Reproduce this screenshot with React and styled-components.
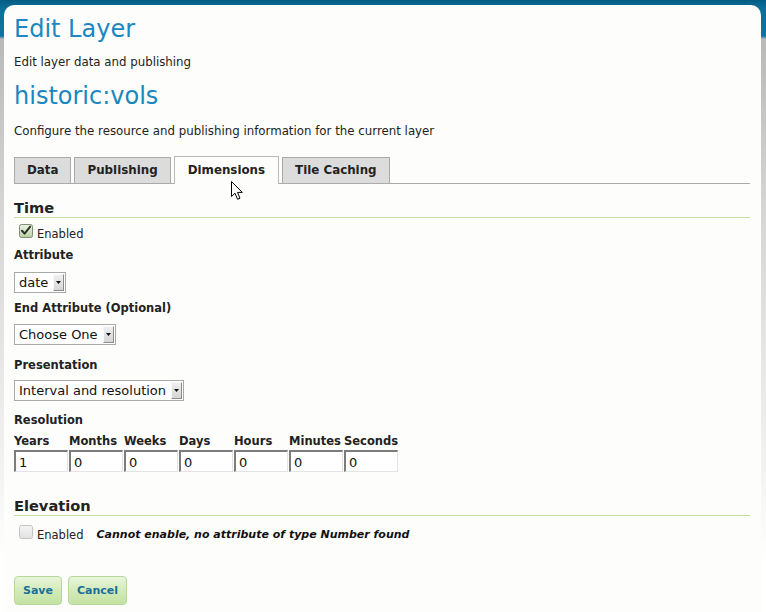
import React from 'react';
import styled, { createGlobalStyle } from 'styled-components';

const GlobalStyle = createGlobalStyle`
  html, body {
    margin: 0;
    padding: 0;
    background: #ffffff;
  }
  body {
    font-family: "DejaVu Sans", Verdana, sans-serif;
    color: #222;
  }
`;

const Frame = styled.div`
  min-height: 612px;
  box-sizing: border-box;
  padding: 5px 5px 0 4px;
  background: linear-gradient(180deg, #035c84 0px, #0b6f98 8px, #0d75a0 36px, #b9b9b9 39px, #d4d4d4 200px, #f4f4f4 480px, #ffffff 560px);
`;

const Panel = styled.div`
  position: relative;
  min-height: 607px;
  box-sizing: border-box;
  background: #fdfdfb;
  border-radius: 10px 10px 0 0;
  padding: 9px 11px 0 10px;
`;

const Title = styled.h1`
  margin: 0;
  font-size: 24px;
  line-height: 30px;
  font-weight: normal;
  color: #1a87c1;
`;

const Intro = styled.p`
  margin: ${p => p.$top}px 0 0;
  font-size: 11.8px;
  line-height: 16px;
  color: #222;
`;

const TabStrip = styled.div`
  position: relative;
  display: flex;
  align-items: flex-end;
  gap: 3px;
  margin-top: 17px;
  border-bottom: 1px solid #aaaaaa;
`;

const Tab = styled.div`
  box-sizing: border-box;
  padding: ${p => (p.$active ? '1px 13px 1px' : '0 12px')};
  margin-bottom: ${p => (p.$active ? '-1px' : '0')};
  border: 1px solid ${p => (p.$active ? '#b8b8b8' : '#aaaaaa')};
  border-bottom: none;
  background: ${p => (p.$active ? '#fdfdfb' : '#dcdcdc')};
  font-size: 11.85px;
  font-weight: bold;
  line-height: 25px;
  color: #222;
`;

const Cursor = styled.svg`
  position: absolute;
  left: 217px;
  top: 25px;
`;

const SectionTitle = styled.h3`
  margin: ${p => p.$top}px 0 0;
  padding-bottom: 1px;
  font-size: 14.6px;
  line-height: 17px;
  font-weight: bold;
  color: #222;
  border-bottom: 1px solid #c4dfa4;
`;

const CheckRow = styled.div`
  display: flex;
  align-items: flex-start;
  margin-top: ${p => p.$top}px;
  padding-left: 5px;
`;

const CheckText = styled.span`
  padding-top: 3px;
  margin-left: 4px;
  font-size: 11.5px;
  line-height: 14px;
  color: #222;
`;

const Note = styled.span`
  padding-top: 3px;
  margin-left: 13px;
  font-size: 11px;
  line-height: 14px;
  font-weight: bold;
  font-style: italic;
  color: #111;
`;

const Label = styled.div`
  margin-top: ${p => p.$top}px;
  font-size: 11.5px;
  line-height: 14px;
  font-weight: bold;
  color: #222;
`;

const SelectBox = styled.div`
  display: inline-flex;
  align-items: center;
  box-sizing: border-box;
  height: 21px;
  margin-top: ${p => p.$top}px;
  padding: 0 1px 0 4px;
  border: 1px solid #a9a9a9;
  background: #ffffff;
  font-size: 13px;
  color: #111;
`;

const SelectArrow = styled.span`
  display: flex;
  align-items: center;
  justify-content: center;
  box-sizing: border-box;
  width: 11px;
  height: 17px;
  margin-left: 5px;
  background: linear-gradient(180deg, #efefef, #d6d6d6);
  border-right: 1px solid #8c8c8c;
  border-bottom: 1px solid #8c8c8c;
  border-top: 1px solid #f8f8f8;
  border-left: 1px solid #f8f8f8;
`;

const Grid = styled.div`
  display: grid;
  grid-template-columns: repeat(7, 55px);
  margin-top: 7px;
`;

const GridLabel = styled.div`
  font-size: 11.5px;
  line-height: 14px;
  font-weight: bold;
  color: #222;
  white-space: nowrap;
`;

const NumberInput = styled.input`
  box-sizing: border-box;
  width: 54px;
  height: 22px;
  margin-top: 2px;
  padding: 2px 0 0 3px;
  border-style: solid;
  border-width: 2px 1px 1px 2px;
  border-color: #7c7c7c #e4e4e4 #e4e4e4 #7c7c7c;
  background: #fff;
  font-family: "DejaVu Sans", Verdana, sans-serif;
  font-size: 13px;
  color: #111;
  outline: none;
`;

const Buttons = styled.div`
  display: flex;
  gap: 6px;
  margin-top: 34px;
`;

const Button = styled.button`
  box-sizing: border-box;
  height: 29px;
  padding: 0 8px;
  border: 1px solid #b6d99a;
  border-radius: 4px;
  background: linear-gradient(180deg, #e9f5dc 0%, #d3eab9 50%, #c3e2a3 100%);
  font-family: "DejaVu Sans", Verdana, sans-serif;
  font-size: 11px;
  font-weight: bold;
  line-height: 27px;
  color: #1b6f98;
`;

const Checkbox = ({ checked, disabled }) => (
  <svg width="14" height="14" viewBox="0 0 14 14">
    <defs>
      <linearGradient id={disabled ? 'cbOff' : 'cbOn'} x1="0" y1="0" x2="0" y2="1">
        <stop offset="0" stopColor={disabled ? '#f4f4f4' : '#eef3e6'} />
        <stop offset="1" stopColor={disabled ? '#e2e2e2' : '#b9cfa4'} />
      </linearGradient>
    </defs>
    <rect x="0.5" y="0.5" width="13" height="13" rx="2" fill={`url(#${disabled ? 'cbOff' : 'cbOn'})`} stroke={disabled ? '#c4c4c4' : '#7d8f70'} />
    {checked && (
      <path d="M3 6.8 L5.6 9.6 L11.2 2.6" fill="none" stroke="#2b3326" strokeWidth="2" strokeLinecap="round" strokeLinejoin="round" />
    )}
  </svg>
);

const Select = ({ value, top }) => (
  <div>
    <SelectBox $top={top}>
      {value}
      <SelectArrow>
        <svg width="5" height="3" viewBox="0 0 5 3">
          <path d="M0 0 H5 L2.5 3 Z" fill="#111" />
        </svg>
      </SelectArrow>
    </SelectBox>
  </div>
);

const units = [
  ['Years', '1'],
  ['Months', '0'],
  ['Weeks', '0'],
  ['Days', '0'],
  ['Hours', '0'],
  ['Minutes', '0'],
  ['Seconds', '0'],
];

const tabs = ['Data', 'Publishing', 'Dimensions', 'Tile Caching'];

export default function App() {
  return (
    <Frame>
      <GlobalStyle />
      <Panel>
        <Title>Edit Layer</Title>
        <Intro $top={10}>Edit layer data and publishing</Intro>
        <Title as="h2" style={{ marginTop: 11 }}>historic:vols</Title>
        <Intro $top={12}>Configure the resource and publishing information for the current layer</Intro>

        <TabStrip>
          {tabs.map(t => (
            <Tab key={t} $active={t === 'Dimensions'}>{t}</Tab>
          ))}
          <Cursor width="13" height="20" viewBox="0 0 13 20">
            <path d="M0.5 0.5 L0.5 15.5 L4 12.2 L6.6 18.3 L9 17.3 L6.5 11.4 L11.3 11.4 Z" fill="#fff" stroke="#000" strokeWidth="1" strokeLinejoin="miter" />
          </Cursor>
        </TabStrip>

        <SectionTitle $top={15}>Time</SectionTitle>
        <CheckRow $top={6}>
          <Checkbox checked />
          <CheckText>Enabled</CheckText>
        </CheckRow>

        <Label $top={7}>Attribute</Label>
        <Select value="date" top={10} />

        <Label $top={8}>End Attribute (Optional)</Label>
        <Select value="Choose One" top={9} />

        <Label $top={13}>Presentation</Label>
        <Select value="Interval and resolution" top={8} />

        <Label $top={12}>Resolution</Label>
        <Grid>
          {units.map(([name]) => (
            <GridLabel key={name}>{name}</GridLabel>
          ))}
          {units.map(([name, v]) => (
            <NumberInput key={name} defaultValue={v} />
          ))}
        </Grid>

        <SectionTitle $top={25}>Elevation</SectionTitle>
        <CheckRow $top={9}>
          <Checkbox disabled />
          <CheckText>Enabled</CheckText>
          <Note>Cannot enable, no attribute of type Number found</Note>
        </CheckRow>

        <Buttons>
          <Button>Save</Button>
          <Button>Cancel</Button>
        </Buttons>
      </Panel>
    </Frame>
  );
}
